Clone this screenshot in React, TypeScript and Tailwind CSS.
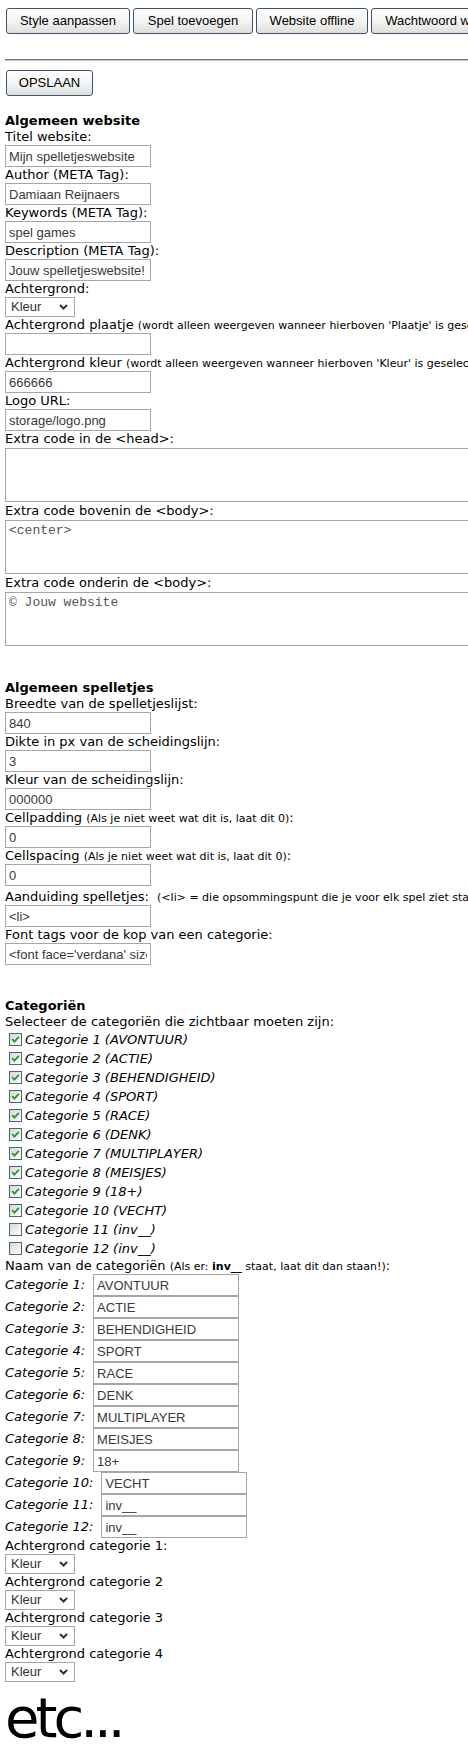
import React from "react";

const inputCls =
  "block w-[146px] h-[22px] border border-[#a0a7ad] bg-white px-[3px] text-[13px] leading-[20px] text-[#3a3a3a] font-['Liberation_Sans',Arial,sans-serif] outline-none";

function Label({ children, className = "" }: { children: React.ReactNode; className?: string }) {
  return <div className={"h-[16px] leading-[16px] whitespace-nowrap " + className}>{children}</div>;
}

function Small({ children }: { children: React.ReactNode }) {
  return <span className="text-[11px]">{children}</span>;
}

function TextInput({ value }: { value: string }) {
  return <input readOnly value={value} className={inputCls} />;
}

function FakeSelect() {
  return (
    <div className="w-[70px] h-[20px] border border-[#a0a7ad] bg-white flex items-center justify-between pl-[5px] pr-[6px] font-['Liberation_Sans',Arial,sans-serif] text-[13px] text-[#333]">
      <span>Kleur</span>
      <svg width="9" height="6" viewBox="0 0 9 6">
        <path d="M1 1 L4.5 4.5 L8 1" stroke="#333" strokeWidth="2" fill="none" />
      </svg>
    </div>
  );
}

function TextArea({ value }: { value: string }) {
  return (
    <textarea
      readOnly
      value={value}
      className="block mt-[1px] mb-[1px] w-[620px] h-[54px] resize-none border border-[#a0a7ad] bg-white px-[3px] py-[2px] text-[13px] leading-[15px] text-[#555] font-['Liberation_Mono','Courier_New',monospace] outline-none overflow-hidden"
    />
  );
}

function Btn({ children, w }: { children: React.ReactNode; w: string }) {
  return (
    <div
      className={
        "h-[26px] shrink-0 flex items-center justify-center whitespace-nowrap rounded-[3px] border border-[#3a5574] bg-linear-to-b from-white via-[#f4f4f2] to-[#dedede] text-[13px] text-black font-['Liberation_Sans',Arial,sans-serif] " +
        w
      }
    >
      {children}
    </div>
  );
}

function Check({ checked, children }: { checked: boolean; children: React.ReactNode }) {
  return (
    <div className="h-[19px] flex items-center pl-[4px] gap-[3px] whitespace-nowrap">
      <span className="w-[13px] h-[13px] shrink-0 border border-[#4a6482] bg-linear-to-br from-[#d8d8d2] to-white flex items-center justify-center">
        {checked && (
          <svg width="9" height="9" viewBox="0 0 9 9">
            <path d="M1.2 4.2 L3.4 6.6 L7.8 1.8" stroke="#22a022" strokeWidth="1.9" fill="none" />
          </svg>
        )}
      </span>
      <span className="italic">{children}</span>
    </div>
  );
}

const cats = [
  "AVONTUUR",
  "ACTIE",
  "BEHENDIGHEID",
  "SPORT",
  "RACE",
  "DENK",
  "MULTIPLAYER",
  "MEISJES",
  "18+",
  "VECHT",
  "inv__",
  "inv__",
];

export default function App() {
  return (
    <div className="w-[468px] min-h-[1751px] overflow-hidden bg-white text-black text-[13px] font-['DejaVu_Sans',Verdana,sans-serif]">
      {/* top buttons */}
      <div className="pt-[8px] pl-[6px] flex gap-[3px]">
        <Btn w="w-[124px]">Style aanpassen</Btn>
        <Btn w="w-[120px]">Spel toevoegen</Btn>
        <Btn w="w-[112px]">Website offline</Btn>
        <Btn w="w-[150px]">Wachtwoord wijzigen</Btn>
      </div>

      <div className="mt-[25px] ml-[5px] h-[2px] border-t border-t-[#6f6f6f] border-b border-b-[#c9c9c9]" />

      <div className="mt-[9px] pl-[6px] flex">
        <Btn w="w-[87px]">OPSLAAN</Btn>
      </div>

      <div className="pl-[5px] flex flex-col">
        {/* Algemeen website */}
        <Label className="mt-[17px] font-bold">Algemeen website</Label>
        <Label>Titel website:</Label>
        <TextInput value="Mijn spelletjeswebsite" />
        <Label>Author (META Tag):</Label>
        <TextInput value="Damiaan Reijnaers" />
        <Label>Keywords (META Tag):</Label>
        <TextInput value="spel games" />
        <Label>Description (META Tag):</Label>
        <TextInput value="Jouw spelletjeswebsite!" />
        <Label>Achtergrond:</Label>
        <FakeSelect />
        <Label>
          Achtergrond plaatje <Small>(wordt alleen weergeven wanneer hierboven 'Plaatje' is geselecteerd)</Small>:
        </Label>
        <TextInput value="" />
        <Label>
          Achtergrond kleur <Small>(wordt alleen weergeven wanneer hierboven 'Kleur' is geselecteerd)</Small>:
        </Label>
        <TextInput value="666666" />
        <Label>Logo URL:</Label>
        <TextInput value="storage/logo.png" />
        <Label>Extra code in de &lt;head&gt;:</Label>
        <TextArea value="" />
        <Label>Extra code bovenin de &lt;body&gt;:</Label>
        <TextArea value="<center>" />
        <Label>Extra code onderin de &lt;body&gt;:</Label>
        <TextArea value="© Jouw website" />

        {/* Algemeen spelletjes */}
        <Label className="mt-[33px] font-bold">Algemeen spelletjes</Label>
        <Label>Breedte van de spelletjeslijst:</Label>
        <TextInput value="840" />
        <Label>Dikte in px van de scheidingslijn:</Label>
        <TextInput value="3" />
        <Label>Kleur van de scheidingslijn:</Label>
        <TextInput value="000000" />
        <Label>
          Cellpadding <Small>(Als je niet weet wat dit is, laat dit 0)</Small>:
        </Label>
        <TextInput value="0" />
        <Label>
          Cellspacing <Small>(Als je niet weet wat dit is, laat dit 0)</Small>:
        </Label>
        <TextInput value="0" />
        <Label className="mt-[3px]">
          Aanduiding spelletjes:{"\u00a0 "}
          <Small>(&lt;li&gt; = die opsommingspunt die je voor elk spel ziet staan)</Small>
        </Label>
        <TextInput value="<li>" />
        <Label>Font tags voor de kop van een categorie:</Label>
        <TextInput value="<font face='verdana' size='2'><b>" />

        {/* Categorien */}
        <Label className="mt-[33px] font-bold">Categoriën</Label>
        <Label>Selecteer de categoriën die zichtbaar moeten zijn:</Label>
        {cats.map((c, i) => (
          <Check key={"c" + i} checked={i < 10}>
            Categorie {i + 1} ({c})
          </Check>
        ))}
        <Label>
          Naam van de categoriën{" "}
          <Small>
            (Als er: <b>inv__</b> staat, laat dit dan staan!)
          </Small>
          :
        </Label>
        {cats.map((c, i) => (
          <div key={"n" + i} className="h-[22px] flex items-center gap-[8px] whitespace-nowrap">
            <span className="italic">Categorie {i + 1}:</span>
            <TextInput value={c} />
          </div>
        ))}
        <Label>Achtergrond categorie 1:</Label>
        <FakeSelect />
        <Label>Achtergrond categorie 2</Label>
        <FakeSelect />
        <Label>Achtergrond categorie 3</Label>
        <FakeSelect />
        <Label>Achtergrond categorie 4</Label>
        <FakeSelect />

        <div className="mt-[8px] h-[56px] text-[56px] leading-[56px] tracking-[-4px] whitespace-nowrap">etc...</div>
      </div>
    </div>
  );
}
